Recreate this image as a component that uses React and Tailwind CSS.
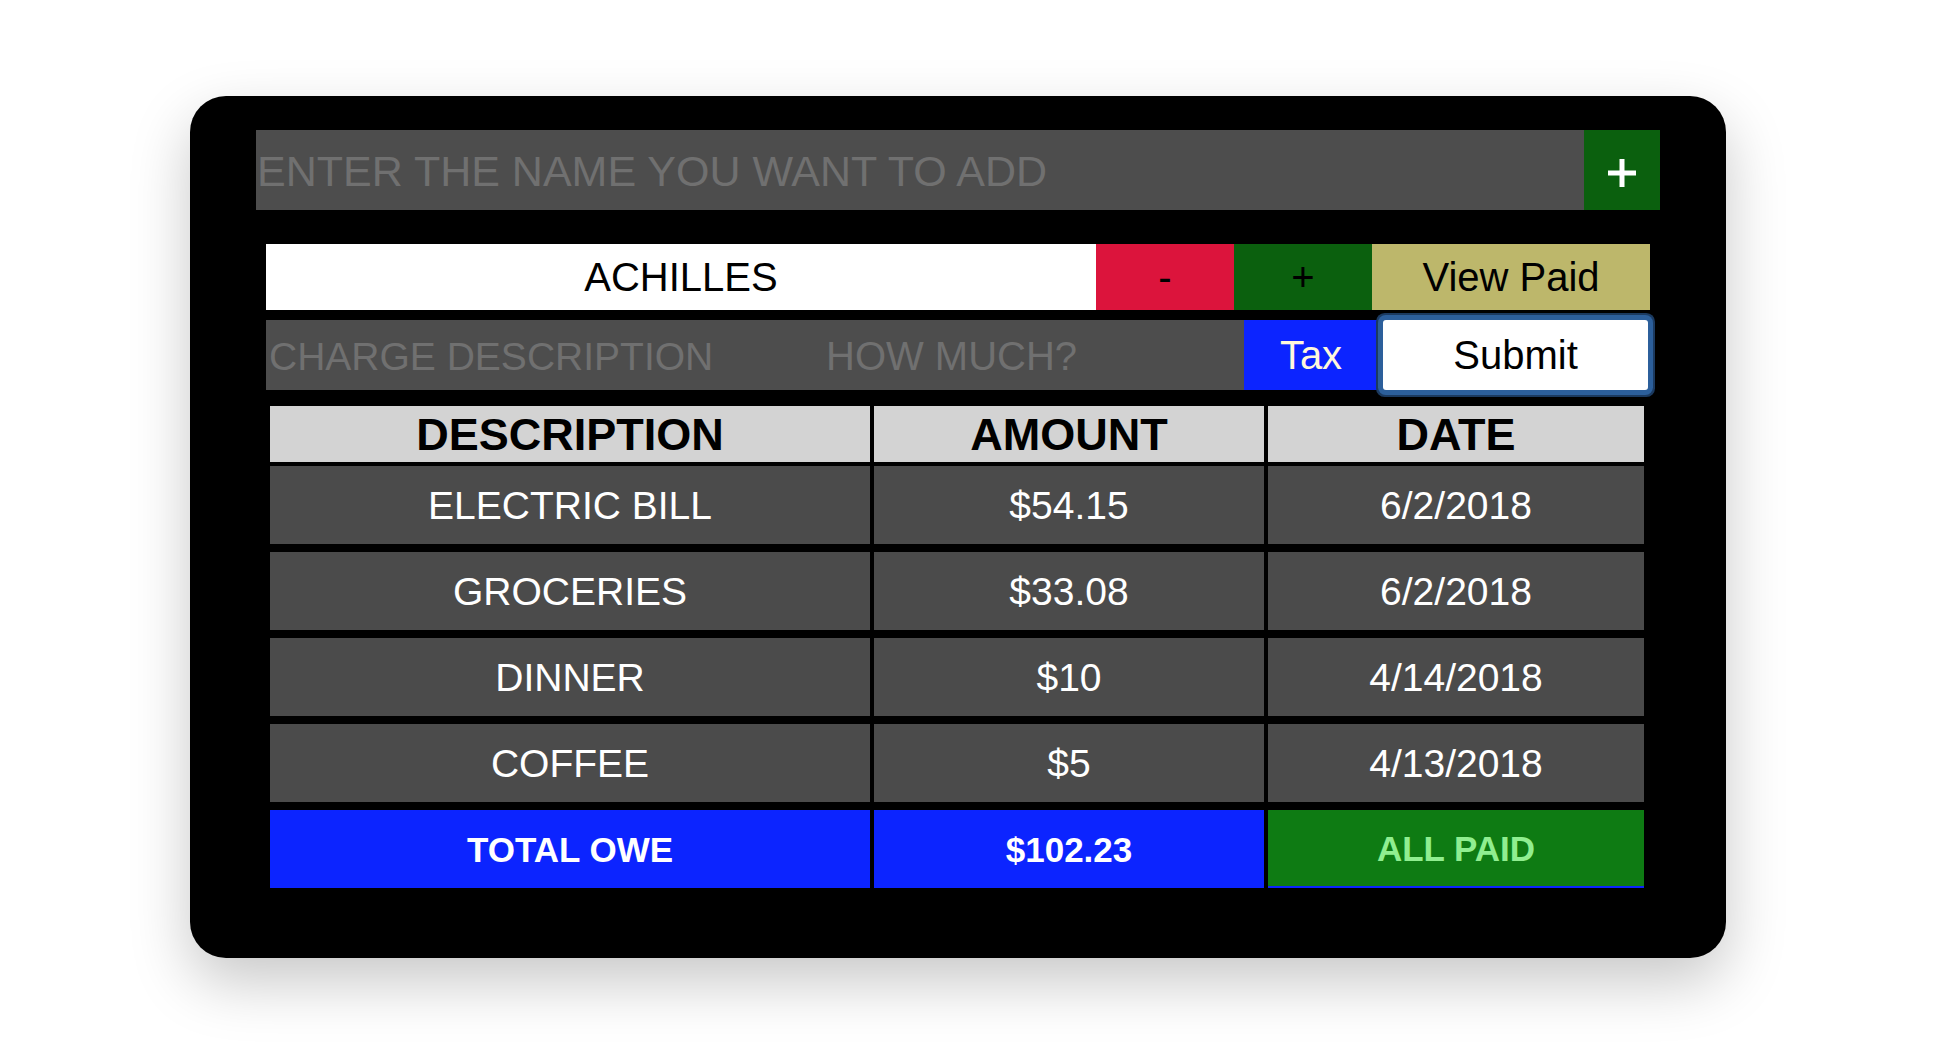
import React from "react";

const rows = [
  ["ELECTRIC BILL", "$54.15", "6/2/2018"],
  ["GROCERIES", "$33.08", "6/2/2018"],
  ["DINNER", "$10", "4/14/2018"],
  ["COFFEE", "$5", "4/13/2018"],
];

export default function App() {
  return (
    <div
      className="min-h-screen w-full bg-white overflow-hidden"
      style={{ fontFamily: '"Liberation Sans", Arial, Helvetica, sans-serif' }}
    >
      <div className="ml-[190px] mt-[96px] w-[1536px] h-[862px] bg-black rounded-[36px] shadow-[0_24px_60px_rgba(0,0,0,0.22)] pt-[34px] flex flex-col">
        {/* name input row */}
        <div className="mx-[66px] flex h-[80px]">
          <input
            className="flex-1 h-full bg-[#4d4d4d] text-[43px] leading-none text-white placeholder:text-[#707070] outline-none pl-[1px] pt-[2px]"
            placeholder="ENTER THE NAME YOU WANT TO ADD"
          />
          <button className="w-[76px] h-full bg-[#0b600e] flex items-center justify-center">
            <svg width="28" height="28" viewBox="0 0 28 28" className="mt-[6px]">
              <rect x="0" y="11.5" width="28" height="5" fill="#ffffff" />
              <rect x="11.5" y="0" width="5" height="28" fill="#ffffff" />
            </svg>
          </button>
        </div>

        {/* person row */}
        <div className="mx-[76px] mt-[34px] flex h-[66px]">
          <div className="w-[830px] h-full bg-white flex items-center justify-center text-[40px] text-black">
            ACHILLES
          </div>
          <button className="w-[138px] h-full bg-[#dc143c] flex items-center justify-center text-[40px] text-black">
            -
          </button>
          <button className="w-[138px] h-full bg-[#0b600e] flex items-center justify-center text-[40px] text-black">
            +
          </button>
          <button className="flex-1 h-full bg-[#bdb76b] flex items-center justify-center text-[40px] text-black">
            View Paid
          </button>
        </div>

        {/* charge row */}
        <div className="mx-[76px] mt-[10px] flex h-[70px]">
          <input
            className="w-[560px] h-full bg-[#4d4d4d] text-[39px] text-white placeholder:text-[#707070] outline-none pt-[3px] pl-[3px]"
            placeholder="CHARGE DESCRIPTION"
          />
          <input
            className="w-[418px] h-full bg-[#4d4d4d] text-[40px] text-white placeholder:text-[#707070] outline-none pt-[3px]"
            placeholder="HOW MUCH?"
          />
          <button className="w-[134px] h-full bg-[#0c24ff] flex items-center justify-center text-[40px] text-[#fff8dc]">
            Tax
          </button>
          <button className="ml-[5px] w-[265px] h-full bg-white rounded-[3px] shadow-[0_0_0_5px_#2c5f9b,0_0_0_7px_#1b3a60] flex items-center justify-center text-[40px] text-black">
            Submit
          </button>
        </div>

        {/* table */}
        <div className="mx-[80px] mt-[16px] flex flex-col">
          <div className="grid grid-cols-[600px_390px_376px] gap-x-[4px] h-[56px]">
            {["DESCRIPTION", "AMOUNT", "DATE"].map((h) => (
              <div
                key={h}
                className="bg-[#d3d3d3] flex items-center justify-center text-[45px] font-bold text-black leading-none"
              >
                {h}
              </div>
            ))}
          </div>
          {rows.map((r, i) => (
            <div
              key={i}
              className={
                "grid grid-cols-[600px_390px_376px] gap-x-[4px] h-[78px] " +
                (i === 0 ? "mt-[4px]" : "mt-[8px]")
              }
            >
              {r.map((c, j) => (
                <div
                  key={j}
                  className="bg-[#4b4b4b] flex items-center justify-center text-[39px] text-white leading-none"
                >
                  {c}
                </div>
              ))}
            </div>
          ))}
          <div className="grid grid-cols-[600px_390px_376px] gap-x-[4px] h-[78px] mt-[8px]">
            <div className="bg-[#0c24ff] flex items-center justify-center text-[35px] font-bold text-white leading-none">
              TOTAL OWE
            </div>
            <div className="bg-[#0c24ff] flex items-center justify-center text-[35px] font-bold text-white leading-none">
              $102.23
            </div>
            <div className="bg-[#0c24ff] flex flex-col">
              <button className="h-[76px] w-full bg-[#0e7b13] flex items-center justify-center text-[35px] font-bold text-[#90ee90] leading-none">
                ALL PAID
              </button>
            </div>
          </div>
        </div>
      </div>
    </div>
  );
}
